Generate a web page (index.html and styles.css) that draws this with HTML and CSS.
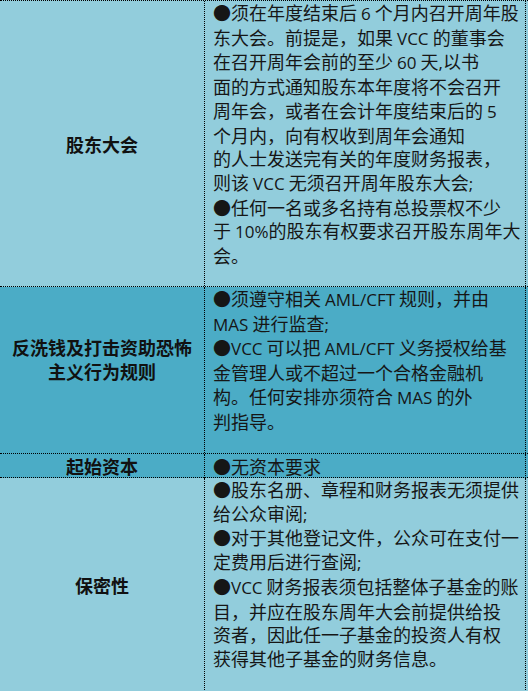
FILE: index.html
```html
<!DOCTYPE html>
<html lang="zh-CN">
<head>
<meta charset="utf-8">
<title>VCC</title>
<link rel="stylesheet" href="styles.css">
</head>
<body>
<div class="sheet">
  <div class="row light r1">
    <div class="label">股东大会</div>
    <div class="body">●须在年度结束后 <span class="lat">6</span> 个月内召开周年股<br>东大会。前提是，如果 <span class="lat">VCC</span> 的董事会<br>在召开周年会前的至少 <span class="lat">60</span> 天<span class="lat">,</span>以书<br>面的方式通知股东本年度将不会召开<br>周年会，或者在会计年度结束后的 <span class="lat">5</span><br>个月内，向有权收到周年会通知<br>的人士发送完有关的年度财务报表，<br>则该 <span class="lat">VCC</span> 无须召开周年股东大会<span class="lat">;</span><br>●任何一名或多名持有总投票权不少<br>于 <span class="lat">10%</span>的股东有权要求召开股东周年大<br>会。</div>
  </div>
  <div class="row dark r2">
    <div class="label up">反洗钱及打击资助恐怖<br>主义行为规则</div>
    <div class="body">●须遵守相关 <span class="lat">AML/CFT</span> 规则，并由<br><span class="lat">MAS</span> 进行监查<span class="lat">;</span><br>●<span class="lat">VCC</span> 可以把 <span class="lat">AML/CFT</span> 义务授权给基<br>金管理人或不超过一个合格金融机<br>构。任何安排亦须符合 <span class="lat">MAS</span> 的外<br>判指导。</div>
  </div>
  <div class="row dark r3">
    <div class="label">起始资本</div>
    <div class="body mid">●无资本要求</div>
  </div>
  <div class="row light r4">
    <div class="label">保密性</div>
    <div class="body">●股东名册、章程和财务报表无须提供<br>给公众审阅<span class="lat">;</span><br>●对于其他登记文件，公众可在支付一<br>定费用后进行查阅<span class="lat">;</span><br>●<span class="lat">VCC</span> 财务报表须包括整体子基金的账<br>目，并应在股东周年大会前提供给投<br>资者，因此任一子基金的投资人有权<br>获得其他子基金的财务信息。</div>
  </div>
</div>
</body>
</html>
```

FILE: styles.css
```css
html, body {
  margin: 0;
  padding: 0;
  background: #ffffff;
}

body {
  width: 528px;
  height: 691px;
  overflow: hidden;
}

.sheet {
  width: 528px;
  font-family: "Noto Sans CJK SC", sans-serif;
  color: #161616;
}

.row {
  display: grid;
  grid-template-columns: 205px 1fr;
  box-sizing: border-box;
  border-bottom: 1px dotted #000;
}

.r1 { border-top: 1px dotted #000; }

.light { background: #92cddc; }
.dark { background: #4bacc6; }

.r1 { height: 287px; }
.r2 { height: 167px; }
.r3 { height: 24px; }
.r4 { height: 214px; border-bottom: none; }

.label {
  box-sizing: border-box;
  border-right: 1px dotted #000;
  display: flex;
  align-items: center;
  justify-content: center;
  text-align: center;
  font-size: 18px;
  line-height: 24px;
  font-weight: 700;
  color: #111;
}

.label.up { padding-bottom: 23px; }

.body {
  box-sizing: border-box;
  margin-right: 2px;
  border-right: 1px dotted #000;
  padding-left: 8px;
  font-size: 18px;
  line-height: 23.7px;
  white-space: nowrap;
}

.body.mid {
  display: flex;
  align-items: center;
  line-height: 23px;
}

.lat {
  font-family: "Open Sans", "Noto Sans CJK SC", sans-serif;
  font-size: 17px;
}
```
